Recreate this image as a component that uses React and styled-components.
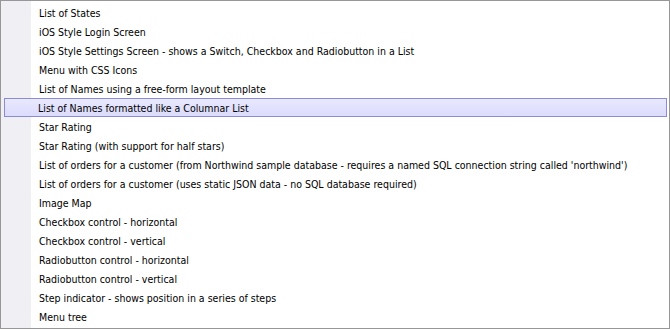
import styled, { createGlobalStyle } from 'styled-components'

const GlobalStyle = createGlobalStyle`
  html, body {
    margin: 0;
    padding: 0;
    background: #ffffff;
  }
`

const Menu = styled.div`
  box-sizing: border-box;
  width: 670px;
  height: 329px;
  border: 1px solid #979797;
  padding: 2px 2px 2px 2px;
  background: linear-gradient(to right, #f0f0f4 0, #f0f0f4 30px, #ffffff 30px);
  font-family: "DejaVu Sans Condensed", "DejaVu Sans", sans-serif;
  font-size: 10.5px;
  color: #000000;
`

const Item = styled.div`
  box-sizing: border-box;
  height: 19px;
  display: flex;
  align-items: center;
  padding-left: ${p => (p.$active ? 33 : 34)}px;
  margin-left: 1px;
  border: ${p => (p.$active ? '1px solid #8b8bd8' : '1px solid transparent')};
  background: ${p => (p.$active ? 'linear-gradient(to bottom, #e8e8ff, #dcdcfc)' : 'transparent')};
  white-space: nowrap;
  cursor: default;
`

const items = [
  'List of States',
  'iOS Style Login Screen',
  'iOS Style Settings Screen - shows a Switch, Checkbox and Radiobutton in a List',
  'Menu with CSS Icons',
  'List of Names using a free-form layout template',
  'List of Names formatted like a Columnar List',
  'Star Rating',
  'Star Rating (with support for half stars)',
  "List of orders for a customer (from Northwind sample database - requires a named SQL connection string called 'northwind')",
  'List of orders for a customer (uses static JSON data - no SQL database required)',
  'Image Map',
  'Checkbox control - horizontal',
  'Checkbox control - vertical',
  'Radiobutton control - horizontal',
  'Radiobutton control - vertical',
  'Step indicator - shows position in a series of steps',
  'Menu tree',
]

const App = () => {
  return (
    <>
      <GlobalStyle />
      <Menu>
        {items.map((label, i) => (
          <Item key={label} $active={i === 5}>
            {label}
          </Item>
        ))}
      </Menu>
    </>
  )
}

export default App
